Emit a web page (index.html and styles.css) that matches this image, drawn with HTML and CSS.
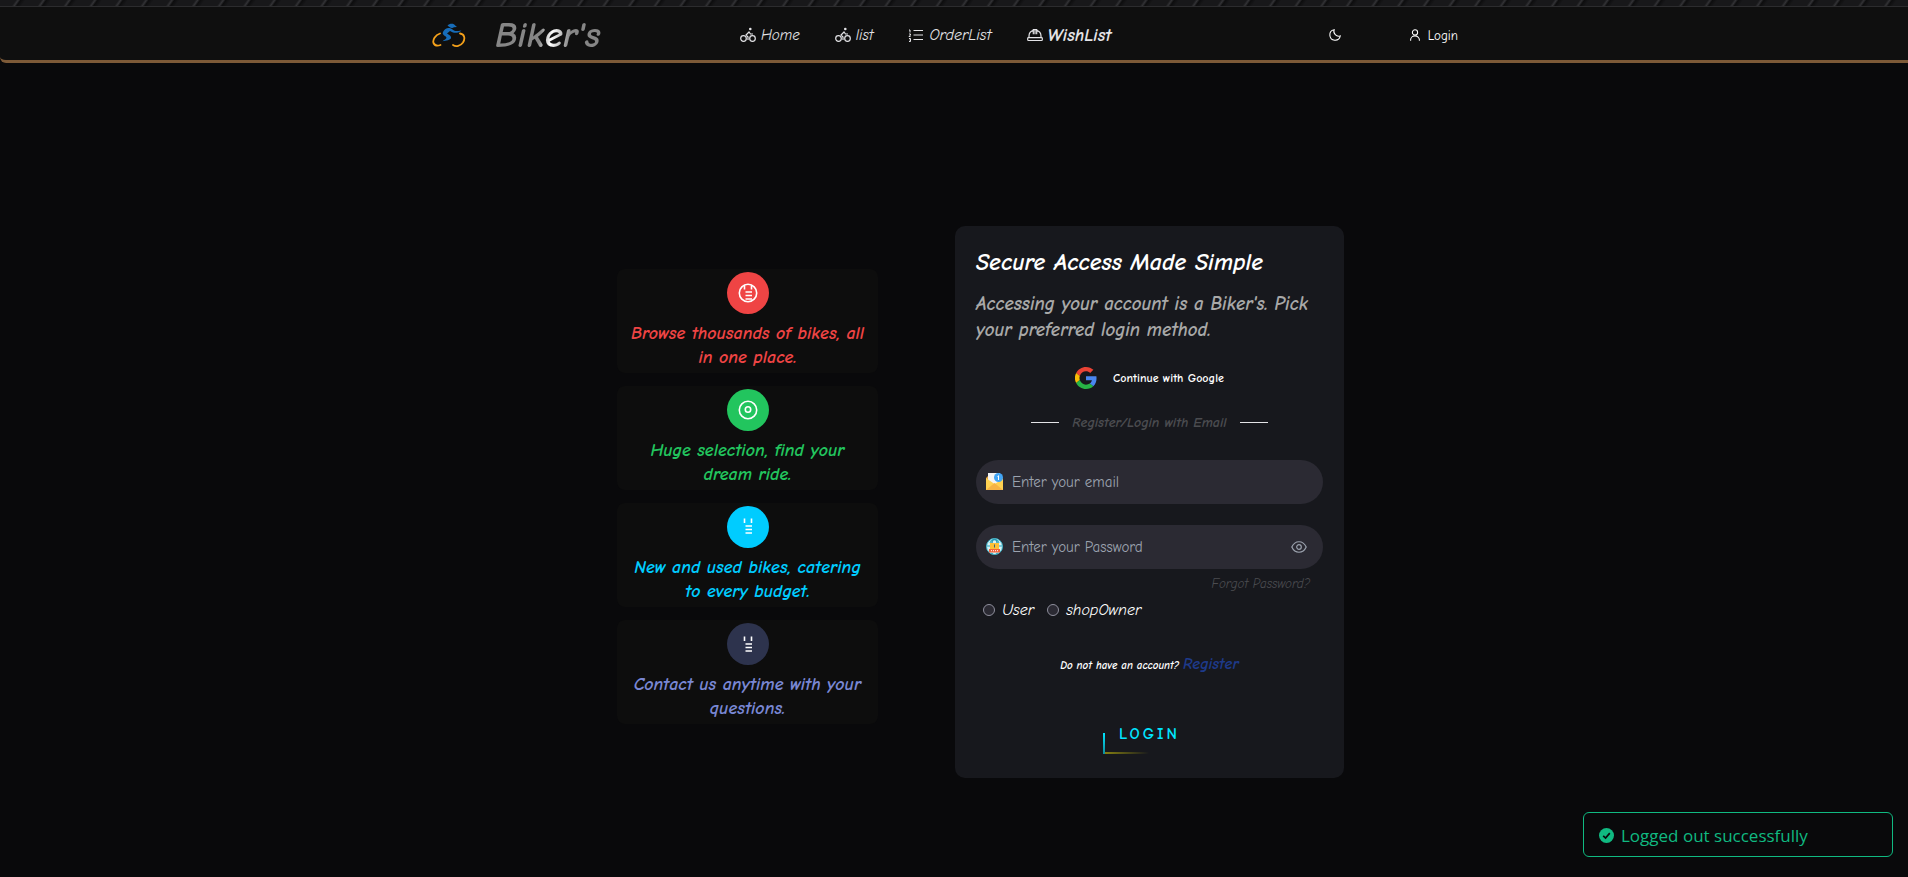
FILE: index.html
```html
<!DOCTYPE html>
<html lang="en">
<head>
<meta charset="utf-8">
<title>Biker's - Login</title>
<link rel="stylesheet" href="styles.css">
</head>
<body>
<header class="site-header">
  <div class="brand">
    <svg class="brand-logo" viewBox="0 0 34 24" aria-hidden="true">
      <g fill="none" stroke="#f5a11a" stroke-linecap="round" stroke-width="1.800">
        <path d="M8 10.500C3 12 .5 17 1.500 20C3 23 6 23 8.500 22"/>
        <path d="M28 10.500C32.500 11 33.500 15.500 31 19.500C28.500 23 24 24 21 22"/>
      </g>
      <path fill="#176cb8" d="M15.500 2.500c2-2.400 6.500-2.500 8 .2l1.500 1.300-3 .2-1.500.8c-2 .3-3-1-5-2.500z"/>
      <path fill="#176cb8" d="M11 9c1.500-3 4-4.500 6.500-4 2.500.5 3 2 5 2.800 2 .7 4-.2 7-.4-2 2-5.500 2.800-8.500 2l-3-1.400-3 2.500c2 1.500 4.500 2.500 4 4.600-.5 2.300-5 2.300-8.500 3.200 1.500-1.600 4-2.200 4-3.500 0-1.800-5-2.400-3.500-5.800z"/>
    </svg>
    <span class="brand-name">Biker's</span>
  </div>
  <nav class="main-nav">
    <a href="#"><svg class="icon" viewBox="0 0 16 16"><circle cx="3.500" cy="11.500" r="2.800"/><circle cx="12.500" cy="11.500" r="2.800"/><circle cx="10.300" cy="2" r=".7"/><path d="M8 13v-3L6 8l3-3 1.500 2H13"/></svg>Home</a>
    <a href="#"><svg class="icon" viewBox="0 0 16 16"><circle cx="3.500" cy="11.500" r="2.800"/><circle cx="12.500" cy="11.500" r="2.800"/><circle cx="10.300" cy="2" r=".7"/><path d="M8 13v-3L6 8l3-3 1.500 2H13"/></svg>list</a>
    <a href="#" class="order"><svg class="icon" viewBox="0 0 16 16"><path d="M5.500 3.500H15M5.500 8H15M5.500 12.500H15"/><path stroke-width="1" d="M1 3h1v2.500M1 7h1.500v1L1 9.500h1.500M1 11.500h1.500v3H1M1.500 13h1"/></svg>OrderList</a>
    <a href="#" class="wish"><svg class="icon" viewBox="0 0 16 16"><rect x=".7" y="10.700" width="14.600" height="2.800" rx=".8"/><path d="M2 10.500V9a6 6 0 0 1 4.300-5.700M14 10.500V9a6 6 0 0 0-4.300-5.700M6.300 7.300V2.600h3.400v4.700M8 3v4.300"/></svg>WishList</a>
  </nav>
  <div class="account">
    <button class="theme" type="button" aria-label="Dark mode"><svg class="icon" viewBox="0 0 16 16"><path d="M7 2a5.500 5.500 0 0 0 7 7A6 6 0 1 1 7 2z"/></svg></button>
    <a class="login-link" href="#"><svg class="icon" viewBox="0 0 16 16"><circle cx="8" cy="5" r="3"/><path d="M3 14.500V13.500a5 4.500 0 0 1 10 0v1"/></svg>Login</a>
  </div>
</header>
<main class="content">
  <section class="features">
    <article class="feature red"><div class="badge"><svg viewBox="0 0 24 24"><circle cx="12" cy="12" r="8.700"/><path d="M8.500 4v4.500M15.500 4v4.500M9.500 11h6.500M9.500 14.500h6.500M9.500 18h6.500"/></svg></div><p>Browse thousands of bikes, all in one place.</p></article>
    <article class="feature green"><div class="badge"><svg viewBox="0 0 24 24"><circle cx="12" cy="12" r="8.700"/><circle cx="12" cy="11.500" r="2.700"/></svg></div><p>Huge selection, find your dream ride.</p></article>
    <article class="feature cyan"><div class="badge"><svg viewBox="0 0 24 24"><path d="M8.500 3.500V8M15.500 3.500V8M9.500 11h6.500M9.500 14.500h6.500M9.500 18h6.500"/></svg></div><p>New and used bikes, catering to every budget.</p></article>
    <article class="feature indigo"><div class="badge"><svg viewBox="0 0 24 24"><path d="M8.500 4.500V9M15.500 4.500V9M9.500 12h6.500M9.500 15.500h6.500M9.500 19h6.500"/></svg></div><p>Contact us anytime with your questions.</p></article>
  </section>
  <form class="login-card">
    <h1>Secure Access Made Simple</h1>
    <p class="intro">Accessing your account is a Biker's. Pick your preferred login method.</p>
    <button class="google" type="button">
      <svg viewBox="0 0 48 48" aria-hidden="true"><path fill="#ea4335" d="M24 9.500c3.500 0 6.700 1.200 9.200 3.600l6.900-6.900C35.900 2.400 30.500 0 24 0 14.600 0 6.500 5.400 2.600 13.200l8 6.200C12.400 13.700 17.700 9.500 24 9.500z"/><path fill="#4a86f0" d="M47 24.600c0-1.600-.2-3.100-.4-4.600H24v9h12.900c-.6 3-2.200 5.500-4.700 7.200l7.700 6C44.400 38 47 31.800 47 24.600z"/><path fill="#fbbc05" d="M10.500 28.600a14.500 14.500 0 0 1 0-9.200l-8-6.200a24 24 0 0 0 0 21.600z"/><path fill="#28b446" d="M24 48c6.500 0 11.900-2.100 15.900-5.800l-7.700-6c-2.200 1.500-4.900 2.300-8.200 2.300-6.300 0-11.600-4.200-13.500-9.900l-8 6.200C6.500 42.600 14.600 48 24 48z"/></svg>
      Continue with Google
    </button>
    <div class="divider"><span>Register/Login with Email</span></div>
    <label class="field">
      <svg class="field-icon" viewBox="0 0 17 17" aria-hidden="true"><path fill="#e8a33d" d="M0 5l2-2h13l2 3v11H0z"/><path fill="#f4f4f4" d="M2 0h12v12H2z"/><path fill="#ffd151" d="M0 5l8.500 6L17 6v11H0z"/><path fill="#f6b344" d="M0 17l8.500-7L17 17z"/><circle cx="12.500" cy="4.500" r="4.500" fill="#42a5f5"/><path stroke="#fff" fill="none" d="M11.500 3.500l1-.8V7"/></svg>
      <input type="email" placeholder="Enter your email" aria-label="Email">
    </label>
    <label class="field">
      <svg class="field-icon" viewBox="0 0 17 17" aria-hidden="true"><circle cx="8.500" cy="8.500" r="8" fill="#d7f3f5" stroke="#3fb6cc"/><path stroke="#27a4c0" fill="none" d="M4 5l1.500-3M13 5l-1.500-3M1 8h3M13 8h3M5 15l2 1M12 15l-2 1"/><path stroke="#2a9db5" fill="none" stroke-width="1.500" d="M6 6V4a2.500 2.500 0 0 1 5 0v2"/><path fill="#fcc037" d="M4 5h9v6H4z"/><path stroke="#35607c" d="M8.500 6.500v3"/><path fill="#f4623a" d="M3 11h11v3.500H3z"/><path stroke="#fff" stroke-dasharray="1" d="M5 12.700h7"/></svg>
      <input type="password" placeholder="Enter your Password" aria-label="Password">
      <button class="reveal" type="button" aria-label="Show password"><svg class="icon" viewBox="0 0 16 16"><path d="M.8 8C4 1 12 1 15.200 8 12 15 4 15 .8 8z"/><circle cx="8" cy="8" r="2.300"/></svg></button>
    </label>
    <a class="forgot" href="#">Forgot Password?</a>
    <div class="roles">
      <label><input type="radio" name="role">User</label>
      <label><input type="radio" name="role">shopOwner</label>
    </div>
    <p class="signup">Do not have an account? <a href="#">Register</a></p>
    <button class="submit" type="submit">LOGIN</button>
  </form>
</main>
<div class="toast" role="status">
  <svg viewBox="0 0 16 16" aria-hidden="true"><circle cx="8" cy="8" r="8" fill="#10b981"/><path fill="none" stroke="#09090b" stroke-width="1.800" d="M4.500 8.500l2.500 2.300L11.500 5.500"/></svg>
  Logged out successfully
</div>
</body>
</html>
```
FILE: styles.css
```css
* { box-sizing: border-box; }
body {
  margin: 0;
  min-height: 100vh;
  display: flex;
  flex-direction: column;
  background: #09090b;
  color: #fff;
  font-family: "Comic Neue", "Comic Sans MS", "Open Sans", sans-serif;
}
h1, p { margin: 0; }
a { color: inherit; text-decoration: none; }
button { border: 0; padding: 0; background: none; color: inherit; font: inherit; cursor: pointer; }
svg { flex: none; }
.icon { width: 16px; height: 16px; fill: none; stroke: currentColor; stroke-width: 1.2; }

.site-header {
  display: grid;
  grid-template-columns: 280px 1fr 130px;
  align-items: center;
  padding: 10px 450px 0 432px;
  background:
    linear-gradient(#2c2c2e, #2c2c2e) 0 6px / 100% 1px no-repeat,
    repeating-linear-gradient(125deg, #18181a 0 13px, #323235 15px, #0d0d0e 17px, #18181a 21px) 0 0 / 100% 6px no-repeat,
    #0f0f0f;
  border-bottom: 3px solid #7d5a38;
  border-bottom-left-radius: 6px;
}
.brand { display: flex; align-items: center; gap: 29px; height: 50px; }
.brand-logo { width: 34px; height: 24px; }
.brand-name {
  padding-right: 4px;
  font-size: 37px;
  line-height: 44px;
  font-weight: 700;
  font-style: italic;
  background: linear-gradient(100deg, #868686 42%, #fff 52%, #868686 68%);
  background-clip: text;
  color: transparent;
}
.main-nav { display: flex; gap: 35px; padding-left: 28px; font-size: 15px; font-style: italic; color: #e4e4e7; }
.main-nav a { display: flex; align-items: center; gap: 5px; }
.main-nav .order { font-size: 16px; }
.main-nav .wish { font-size: 18px; font-weight: 600; }
.account { display: flex; align-items: center; justify-content: space-between; font-size: 13px; }
.account .icon { width: 14px; height: 14px; }
.theme { display: flex; }
.login-link { display: flex; align-items: center; gap: 6px; }

.content {
  flex: 1;
  display: flex;
  justify-content: center;
  align-items: center;
  gap: 77px;
  padding: 63px 0 0 53px;
}
.features { display: grid; gap: 13px; width: 261px; margin-bottom: 11px; }
.feature {
  display: flex;
  flex-direction: column;
  align-items: center;
  gap: 8px;
  padding: 3px 10px;
  border-radius: 8px;
  background: #0d0d0d;
  text-align: center;
  font-size: 18px;
  line-height: 24px;
  font-weight: 700;
  font-style: italic;
}
.badge { display: grid; place-items: center; width: 42px; height: 42px; border-radius: 50%; flex: none; }
.badge svg { width: 24px; height: 24px; fill: none; stroke: #fff; stroke-width: 1.6; }
.red { color: #ef4444; }
.red .badge { background: #ef4444; }
.green { color: #22c55e; }
.green .badge { background: #22c55e; }
.cyan { color: #00ccff; }
.cyan .badge { background: #00ccff; }
.indigo { color: #7987d4; }
.indigo .badge { background: #2d334d; }

.login-card {
  display: flex;
  flex-direction: column;
  width: 389px;
  padding: 22px 21px 24px;
  border-radius: 10px;
  background: #17181d;
}
.login-card h1 { font-size: 24px; line-height: 28px; font-weight: 700; font-style: italic; }
.intro { margin-top: 15px; font-size: 19px; line-height: 26px; font-weight: 700; font-style: italic; color: #a8a8a8; }
.google { display: flex; align-items: center; align-self: center; gap: 16px; margin-top: 24px; font-size: 12px; font-weight: 700; }
.google svg { width: 22px; height: 22px; }
.divider { display: flex; align-items: center; justify-content: center; gap: 13px; margin-top: 24px; font-size: 14px; line-height: 20px; font-weight: 700; font-style: italic; color: #4b4c50; }
.divider::before, .divider::after { content: ""; width: 28px; height: 1px; background: #e4e4e7; }
.field { display: flex; align-items: center; gap: 9px; height: 44px; padding: 0 16px 0 10px; border-radius: 22px; background: #2b2a33; margin-top: 21px; }
.divider + .field { margin-top: 27px; }
.field-icon { width: 17px; height: 17px; }
.field input { flex: 1; min-width: 0; border: 0; outline: 0; padding: 0; background: none; color: #fff; font-family: inherit; font-size: 15px; line-height: 20px; }
.field input::placeholder { color: #9ca3af; opacity: 1; }
.reveal { display: flex; color: #9ca3af; }
.forgot { align-self: flex-end; margin: 6px 13px 0 0; font-size: 13px; line-height: 18px; font-style: italic; color: #4b4c50; }
.roles { display: flex; gap: 13px; margin-top: 7px; padding-left: 7px; font-size: 16px; line-height: 20px; font-style: italic; }
.roles label { display: flex; align-items: center; gap: 7px; }
.roles input { appearance: none; width: 12px; height: 12px; margin: 0; border: 1px solid #8f8f9d; border-radius: 50%; background: #2b2a33; }
.signup { margin-top: 32px; text-align: center; font-size: 11px; line-height: 24px; font-weight: 700; font-style: italic; }
.signup a { font-size: 16px; color: #1e3a8a; }
.submit {
  align-self: center;
  margin-top: 38px;
  padding: 0 16px 2px;
  height: 38px;
  font-size: 16px;
  line-height: 20px;
  font-weight: 700;
  letter-spacing: 3px;
  color: #00e5ff;
  background:
    linear-gradient(#00e5ff, #0e8c9c) 0 100% / 2px 21px no-repeat,
    linear-gradient(90deg, #8a8410, transparent) 0 100% / 46px 2px no-repeat;
}

.toast {
  position: fixed;
  right: 15px;
  bottom: 20px;
  display: flex;
  align-items: center;
  gap: 7px;
  width: 310px;
  height: 45px;
  padding: 2px 15px 0;
  border: 1px solid #10b981;
  border-radius: 6px;
  background: #09090b;
  color: #10b981;
  font: 17px/24px "Open Sans", sans-serif;
}
.toast svg { width: 15px; height: 15px; }
```
